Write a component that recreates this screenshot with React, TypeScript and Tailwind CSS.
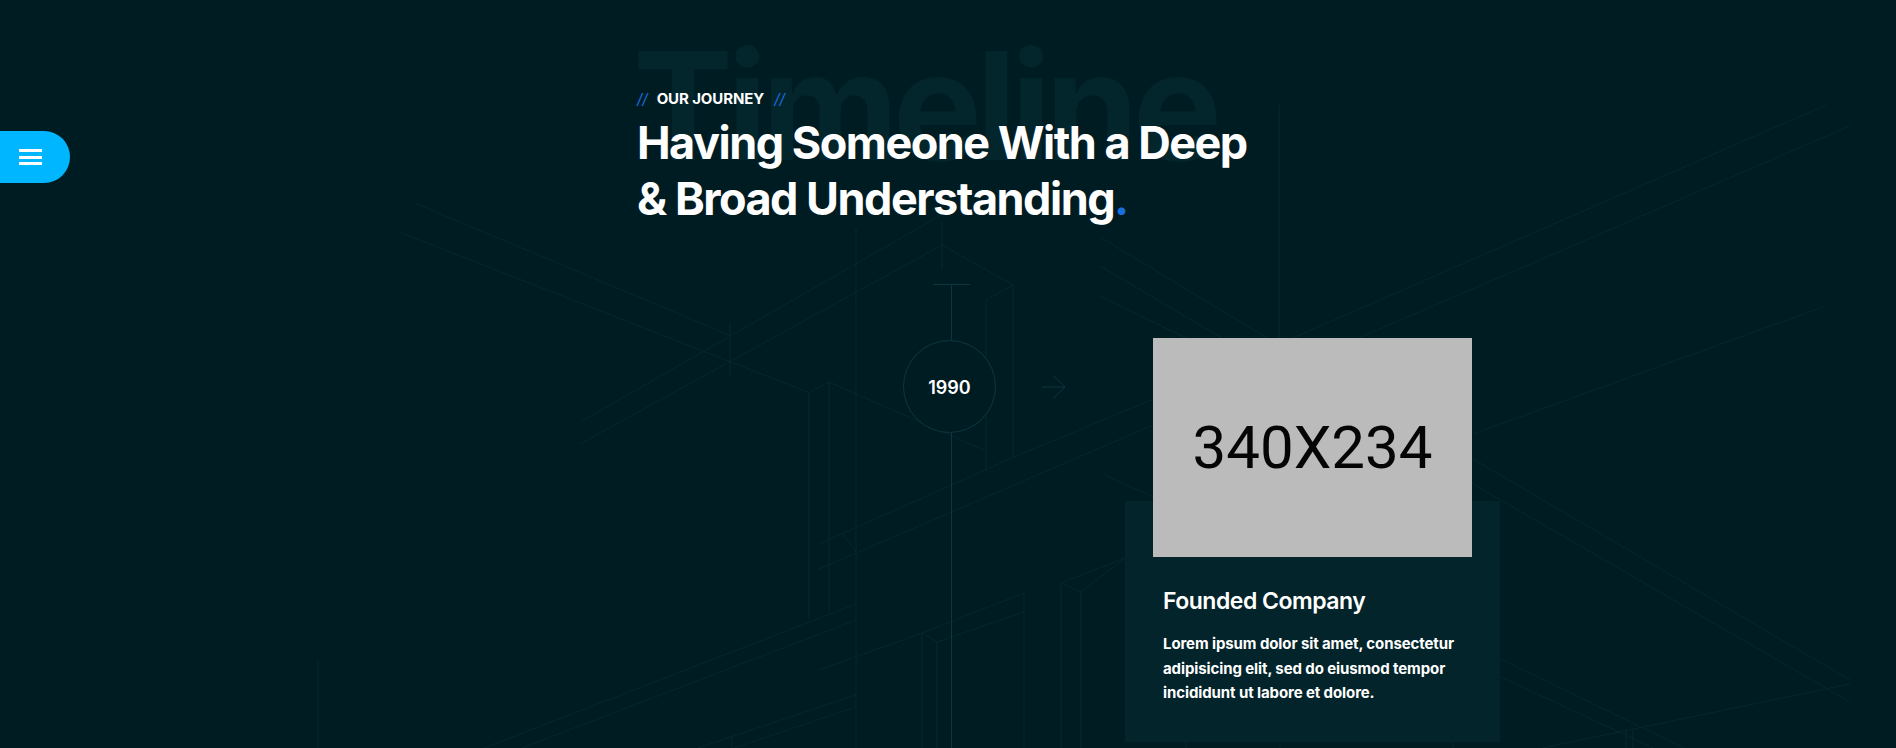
const BG_LINES = [
  [417, 204, 729, 335], [399, 232, 810, 393], [809, 393, 829, 382], [829, 382, 986, 451],
  [809, 393, 809, 619], [829, 382, 829, 612], [582, 421, 943, 214], [580, 444, 942, 245],
  [942, 245, 1013, 285], [1013, 285, 986, 300], [1013, 285, 1013, 457], [986, 300, 986, 471],
  [730, 322, 730, 375], [856, 228, 856, 748], [942, 221, 942, 270],
  [819, 544, 1014, 457], [1014, 457, 1151, 400], [819, 569, 1151, 426], [843, 534, 856, 552],
  [484, 748, 856, 604], [522, 748, 856, 620], [819, 670, 922, 633], [922, 633, 1024, 593],
  [922, 633, 937, 642], [937, 642, 1024, 612], [922, 633, 922, 748], [937, 642, 937, 748],
  [1024, 593, 1024, 748], [1061, 583, 1061, 748], [1081, 592, 1081, 748],
  [1061, 583, 1081, 592], [1081, 592, 1125, 558], [1061, 583, 1125, 558], [698, 748, 856, 695],
  [734, 748, 856, 707], [732, 738, 732, 748], [318, 660, 318, 748],
  [1279, 105, 1279, 338], [1293, 338, 1826, 105], [1359, 338, 1850, 126], [1473, 434, 1823, 307],
  [1473, 459, 1850, 680], [1473, 484, 1850, 702], [1501, 659, 1684, 748], [1501, 677, 1653, 748],
  [1850, 684, 1542, 748], [1626, 730, 1626, 748], [1633, 730, 1633, 748],
  [1100, 237, 1267, 338], [1100, 266, 1222, 338], [1100, 296, 1186, 338],
  [1105, 475, 1153, 497], [1186, 742, 1186, 748], [1280, 742, 1280, 748], [1453, 742, 1453, 748],
];

function BlueprintLines() {
  return (
    <svg className="absolute inset-0" width="1896" height="748" viewBox="0 0 1896 748" fill="none">
      {BG_LINES.map(([x1, y1, x2, y2], i) => (
        <line key={i} x1={x1} y1={y1} x2={x2} y2={y2} stroke="#06262e" strokeWidth="1" />
      ))}
    </svg>
  );
}

export default function App() {
  return (
    <div className="relative h-[748px] w-full overflow-hidden bg-[#001c23] font-['Inter',sans-serif] text-white">
      <BlueprintLines />

      {/* Menu toggle */}
      <button className="absolute left-0 top-[131px] z-20 flex h-[52px] w-[70px] flex-col items-start justify-center gap-[3.5px] rounded-r-[26px] bg-[#00b7ff] pl-[19px]">
        <span className="h-[3px] w-[23px] bg-white" />
        <span className="h-[3px] w-[23px] bg-white" />
        <span className="h-[3px] w-[23px] bg-white" />
      </button>

      <div className="relative pl-[637px]">
        {/* Section title */}
        <div className="relative h-[284px] pt-[90px]">
          <div className="absolute -left-[4px] top-[16px] text-[150px] font-bold leading-[180px] tracking-[-6px] text-[#03252c]">
            Timeline
          </div>
          <div className="relative flex h-[18px] items-center text-[15px] font-bold uppercase leading-[18px] tracking-[-0.1px]">
            <span className="font-normal italic text-[#1a6fe0]">//</span>
            <span className="ml-[9px] mr-[10px]">Our Journey</span>
            <span className="font-normal italic text-[#1a6fe0]">//</span>
          </div>
          <h2 className="relative mt-[7px] text-[45px] font-bold leading-[56px] tracking-[-1.5px]">
            Having Someone With a Deep
            <br />& Broad Understanding<span className="text-[#1a6fe0]">.</span>
          </h2>
        </div>

        {/* Timeline row */}
        <div className="ml-[266px] flex h-[464px]">
          <div className="flex w-[93px] flex-col items-center">
            <div className="ml-[4px] h-px w-[37px] bg-[#0d3640]" />
            <div className="ml-[4px] h-[55px] w-px bg-[#0d3640]" />
            <div className="flex h-[93px] w-[93px] items-center justify-center rounded-full border border-[#0d3640] bg-[#001c23] pt-[2px] text-[18px] font-semibold">
              1990
            </div>
            <div className="ml-[4px] w-px flex-1 bg-[#0d3640]" />
          </div>

          <div className="ml-[46px] mt-[90px] h-[26px] w-[24px]">
            <svg width="24" height="26" viewBox="0 0 24 26" fill="none" stroke="#0d3640" strokeWidth="1">
              <path d="M0 13H23M11 1.5L23 13L11 24.5" />
            </svg>
          </div>

          <div className="ml-[59px] mt-[54px] w-[375px]">
            <div className="relative z-10 mx-[28px] flex h-[219px] w-[319px] items-center justify-center bg-[#bbbbbb] font-['Roboto',sans-serif] text-[60px] leading-none text-[#050505]">
              340X234
            </div>
            <div className="-mt-[56px] h-[241px] bg-[#03242b] px-[38px] pt-[85px]">
              <h3 className="text-[23px] font-semibold leading-[30px] tracking-[-0.5px]">Founded Company</h3>
              <p className="mt-[16px] text-[15px] font-bold leading-[24.5px] tracking-[-0.1px]">
                Lorem ipsum dolor sit amet, consectetur adipisicing elit, sed do eiusmod tempor incididunt ut labore et dolore.
              </p>
            </div>
          </div>
        </div>
      </div>
    </div>
  );
}
